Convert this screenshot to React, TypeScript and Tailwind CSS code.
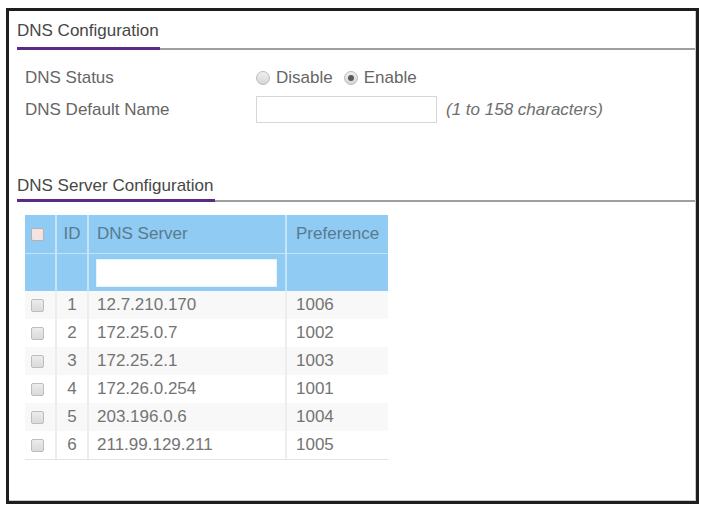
import React from "react";

const rows = [
  { id: 1, ip: "12.7.210.170", pref: "1006" },
  { id: 2, ip: "172.25.0.7", pref: "1002" },
  { id: 3, ip: "172.25.2.1", pref: "1003" },
  { id: 4, ip: "172.26.0.254", pref: "1001" },
  { id: 5, ip: "203.196.0.6", pref: "1004" },
  { id: 6, ip: "211.99.129.211", pref: "1005" },
];

function Radio({ checked }: { checked?: boolean }) {
  return (
    <span className="flex h-[14px] w-[14px] items-center justify-center rounded-full border border-[#bcbcbc] bg-[linear-gradient(#f0f0f0,#d6d6d6)]">
      {checked && <span className="h-[6px] w-[6px] rounded-full bg-[#5a5a5a]" />}
    </span>
  );
}

function Box({ header }: { header?: boolean }) {
  return (
    <span
      className={
        header
          ? "block h-[13px] w-[13px] rounded-[2px] border border-[#bcaeae] bg-[#f2e4e2]"
          : "block h-[13px] w-[13px] rounded-[2px] border border-[#bdbdbd] bg-[linear-gradient(#ececec,#dadada)]"
      }
    />
  );
}

export default function App() {
  return (
    <div className="h-[506px] w-[701px] bg-white pl-[6px] pt-[8px] font-['Liberation_Sans',Arial,sans-serif] text-[17px] leading-[20px]">
      <div className="h-[496px] w-[693px] border-[3px] border-[#1e1e1e]">
        <div className="h-full border-b border-r border-[#c9c9c9] pl-[8px] pt-[10px]">
          {/* Heading 1 */}
          <div className="flex items-end">
            <div className="border-b-[3px] border-[#5b2a82] pb-[6px] pr-[1px] text-[#474747]">DNS Configuration</div>
            <div className="flex-1 border-b-2 border-[#a0a0a0]" />
          </div>

          {/* Form */}
          <div className="pl-[8px] text-[#666666]">
            <div className="mt-[16px] flex h-[24px] items-center">
              <div className="w-[231px]">DNS Status</div>
              <div className="flex items-center">
                <Radio />
                <span className="ml-[6px]">Disable</span>
                <span className="ml-[11px]">
                  <Radio checked />
                </span>
                <span className="ml-[6px]">Enable</span>
              </div>
            </div>
            <div className="mt-[6px] flex h-[27px] items-center">
              <div className="w-[231px]">DNS Default Name</div>
              <div className="h-[27px] w-[181px] border border-[#d6d6d6] bg-white" />
              <div className="ml-[9px] italic text-[#6e6e6e]">(1 to 158 characters)</div>
            </div>
          </div>

          {/* Heading 2 */}
          <div className="mt-[53px] flex items-end">
            <div className="border-b-[3px] border-[#5b2a82] pb-[3px] pr-[1px] text-[#474747]">DNS Server Configuration</div>
            <div className="flex-1 border-b-2 border-[#a0a0a0]" />
          </div>

          {/* Table */}
          <div className="mt-[13px] pl-[8px]">
            <div className="w-[363px]">
              <div className="grid h-[38px] grid-cols-[30px_32px_198px_103px] bg-[#8fcbf2] text-[#587a90]">
                <div className="flex items-center pl-[6px]">
                  <Box header />
                </div>
                <div className="flex items-center justify-center border-l-2 border-[#c3e4f9]">ID</div>
                <div className="flex items-center border-l-2 border-[#c3e4f9] pl-[8px]">DNS Server</div>
                <div className="flex items-center border-l-2 border-[#c3e4f9] pl-[9px]">Preference</div>
              </div>
              <div className="grid h-[38px] grid-cols-[30px_32px_198px_103px] border-t border-[#c3e4f9] bg-[#8fcbf2]">
                <div />
                <div className="border-l-2 border-[#c3e4f9]" />
                <div className="flex items-center border-l-2 border-[#c3e4f9] pl-[7px]">
                  <div className="h-[28px] w-[181px] border border-[#e6f3fb] bg-white" />
                </div>
                <div className="border-l-2 border-[#c3e4f9]" />
              </div>
              <div className="border-b border-[#e4e4e4] text-[#747474]">
                {rows.map((r, i) => (
                  <div
                    key={r.id}
                    className={
                      "grid h-[28px] grid-cols-[30px_32px_198px_103px] " +
                      (i % 2 === 0 ? "bg-[#f8f8f8]" : "bg-white")
                    }
                  >
                    <div className="flex items-center pl-[6px]">
                      <Box />
                    </div>
                    <div className="flex items-center justify-center border-l-2 border-[#ededed]">{r.id}</div>
                    <div className="flex items-center border-l-2 border-[#ededed] pl-[8px]">{r.ip}</div>
                    <div className="flex items-center border-l-2 border-[#ededed] pl-[9px]">{r.pref}</div>
                  </div>
                ))}
              </div>
            </div>
          </div>
        </div>
      </div>
    </div>
  );
}
